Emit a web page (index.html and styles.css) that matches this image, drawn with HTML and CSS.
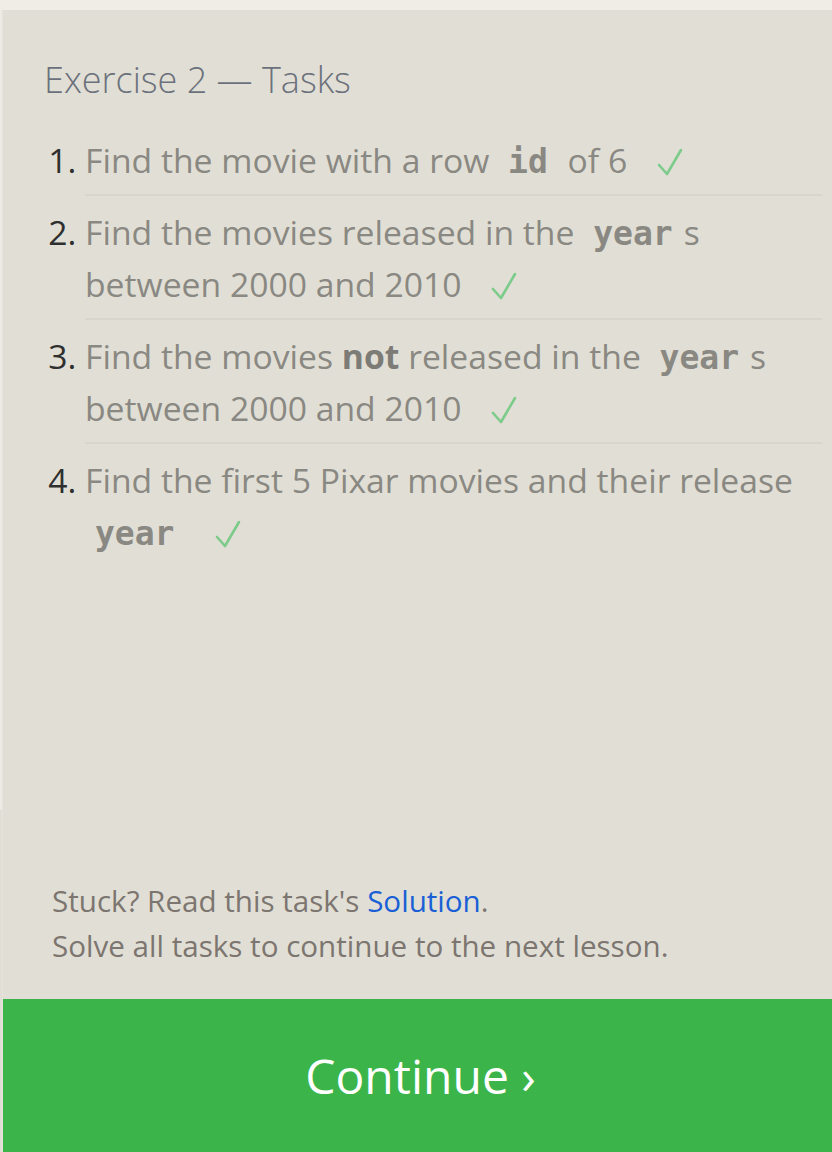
FILE: index.html
```html
<!DOCTYPE html>
<html>
<head>
<meta charset="utf-8">
<link rel="stylesheet" href="styles.css">
</head>
<body>
<div class="page">
  <div class="topbar"></div>
  <div class="panel">
    <div class="content">
      <h2 class="title">Exercise 2 — Tasks</h2>
      <ol class="tasks">
        <li>Find the movie with a row <code>id</code> of 6 <svg class="check" viewBox="0 0 26 28"><path d="M2 17 L10 26 L24 2"/></svg></li>
        <li>Find the movies released in the <code>year</code>s between 2000 and 2010 <svg class="check" viewBox="0 0 26 28"><path d="M2 17 L10 26 L24 2"/></svg></li>
        <li>Find the movies <strong>not</strong> released in the <code>year</code>s between 2000 and 2010 <svg class="check" viewBox="0 0 26 28"><path d="M2 17 L10 26 L24 2"/></svg></li>
        <li>Find the first 5 Pixar movies and their release <code>year</code> <svg class="check" viewBox="0 0 26 28"><path d="M2 17 L10 26 L24 2"/></svg></li>
      </ol>
    </div>
    <div class="footer">
      <p>Stuck? Read this task's <a href="#">Solution</a>.</p>
      <p>Solve all tasks to continue to the next lesson.</p>
    </div>
    <button class="continue">Continue ›</button>
  </div>
</div>
</body>
</html>
```

FILE: styles.css
```css
html, body {
  margin: 0;
  padding: 0;
  background: #e1dfd5;
}
body {
  font-family: "Open Sans", "Noto Sans", sans-serif;
  width: 832px;
  height: 1152px;
  overflow: hidden;
}
.page {
  display: flex;
  flex-direction: column;
  height: 1152px;
  background: linear-gradient(#eceae3, #eceae3) no-repeat 0 0 / 2px 810px, #e1dfd5;
}
.topbar {
  height: 10px;
  background: #efede6;
  flex: none;
}
.panel {
  flex: 1;
  margin-left: 2px;
  background: #e1dfd5;
  display: flex;
  flex-direction: column;
  border-left: 1px solid #e4e2da;
}
.content {
  flex: 1;
  padding: 48px 10px 0 41px;
}
.title {
  margin: 0;
  font-size: 36px;
  font-weight: 300;
  color: #6b717c;
  line-height: 44px;
}
.tasks {
  margin: 22px 0 0;
  padding-left: 41px;
  font-size: 33.7px;
  line-height: 52px;
  color: #8a8882;
}
.tasks li {
  padding: 10px 0 8px;
  border-bottom: 2px solid #d8d6cc;
}
.tasks li:last-child {
  border-bottom: none;
}
.tasks li::marker {
  color: #2f2f2f;
}
.tasks code {
  font-family: "DejaVu Sans Mono", monospace;
  font-weight: bold;
  font-size: 33px;
  line-height: 1;
  padding: 0 11px 0 10px;
  color: #8a8882;
}
.tasks strong {
  color: #7d7b76;
}
.check {
  width: 26px;
  height: 28px;
  margin-left: 21px;
  vertical-align: -3px;
  fill: none;
  stroke: #7ccb8b;
  stroke-width: 2.6;
  stroke-linecap: round;
  stroke-linejoin: round;
}
.footer {
  padding: 0 0 31px 49px;
  font-size: 29.6px;
  line-height: 45px;
  color: #7c7570;
}
.footer p {
  margin: 0;
}
.footer a {
  color: #1a5fd6;
  text-decoration: none;
}
.continue {
  flex: none;
  height: 153px;
  border: none;
  margin: 0;
  background: #3bb54a;
  color: #ffffff;
  font-family: "Open Sans", "Noto Sans", sans-serif;
  font-size: 48px;
  padding: 0 0 0 6px;
  width: 100%;
}
```
